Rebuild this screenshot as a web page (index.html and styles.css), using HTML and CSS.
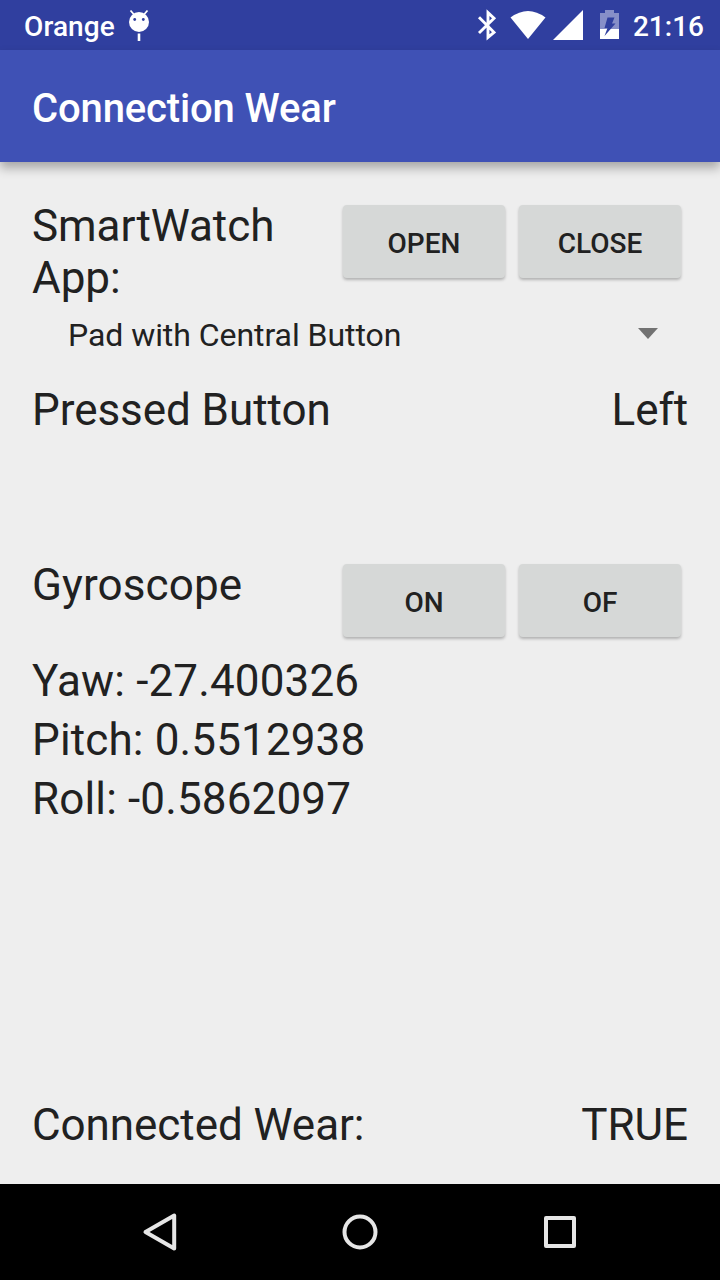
FILE: index.html
```html
<!DOCTYPE html>
<html lang="en">
<head>
<meta charset="utf-8">
<title>Connection Wear</title>
<link rel="stylesheet" href="styles.css">
</head>
<body>
<div class="screen">
  <header class="status-bar">
    <span class="carrier">Orange</span>
    <svg class="debug-icon" width="24" height="32" viewBox="0 0 24 32">
      <path d="M3.500 1.500 7 5.500M20.500 1.500 17 5.500" stroke="#fff" stroke-width="1.800"/>
      <circle cx="12" cy="13" r="10" fill="#fff"/>
      <circle cx="7.700" cy="10.500" r="1.400" fill="#303f9f"/>
      <circle cx="16.300" cy="10.500" r="1.400" fill="#303f9f"/>
      <path d="M10.700 24.500h2.600V32h-2.600z" fill="#fff"/>
    </svg>
    <svg class="system-icons" width="150" height="50" viewBox="470 0 150 50">
      <path d="M479 17.300 494 32.300 488 37.300V12.700L494 18.300 479 33" fill="none" stroke="#fff" stroke-width="2.900"/>
      <path d="M510.500 17.500Q528 4.500 545.500 17.500L528 39z" fill="#fff"/>
      <path d="M583 10v30h-30z" fill="#fff"/>
      <path d="M605 10h9v3h5v16h-19V13h5z" fill="#878fc8"/>
      <path d="M600 29h19v10h-19z" fill="#fff"/>
      <path d="M607.500 17.500h7L612 23.500h3.500L604.500 36l3-8H604.500z" fill="#303f9f"/>
    </svg>
    <span class="clock">21:16</span>
  </header>
  <div class="app-bar"><h1 class="title">Connection Wear</h1></div>
  <main class="content">
    <section class="row app-row">
      <div class="label">SmartWatch App:</div>
      <button class="button">OPEN</button>
      <button class="button">CLOSE</button>
    </section>
    <div class="spinner">
      <span>Pad with Central Button</span>
      <svg width="20" height="11" viewBox="0 0 20 11"><path d="M0 0h20L10 11z" fill="#727272"/></svg>
    </div>
    <section class="row pressed-row"><span>Pressed Button</span><span>Left</span></section>
    <section class="row gyro-row">
      <div class="label gyro-label">Gyroscope</div>
      <button class="button">ON</button>
      <button class="button">OF</button>
    </section>
    <section class="readings">
      <div>Yaw: -27.400326</div>
      <div>Pitch: 0.5512938</div>
      <div>Roll: -0.5862097</div>
    </section>
    <section class="row connected-row"><span>Connected Wear:</span><span>TRUE</span></section>
  </main>
  <nav class="nav-bar">
    <svg width="40" height="40" viewBox="0 0 40 40"><path d="M5.500 20 34.200 3.500V36.500z"/></svg>
    <svg width="40" height="40" viewBox="0 0 40 40"><circle cx="20" cy="20" r="15.500"/></svg>
    <svg width="40" height="40" viewBox="0 0 40 40"><path d="M6 6h28v28H6z"/></svg>
  </nav>
</div>
</body>
</html>
```
FILE: styles.css
```css
* {
  box-sizing: border-box;
}

body {
  margin: 0;
  font-family: Roboto, sans-serif;
  color: #212121;
}

.screen {
  display: flex;
  flex-direction: column;
  width: 720px;
  height: 1280px;
  background: #eee;
  overflow: hidden;
}

.status-bar {
  display: flex;
  height: 50px;
  padding: 0 16px 0 24px;
  background: #303f9f;
  color: #fff;
  font-size: 28px;
  font-weight: 500;
  line-height: 33px;
}

.carrier,
.clock {
  padding-top: 10px;
}

.carrier {
  letter-spacing: 0.1px;
}

.debug-icon {
  margin: 9px 0 0 12px;
}

.system-icons {
  margin-left: auto;
  margin-right: 13px;
}

.app-bar {
  height: 112px;
  flex: none;
  padding: 35px 32px 0;
  background: #3f51b5;
  color: #fff;
  box-shadow: 0 6px 10px rgba(0, 0, 0, 0.3);
}

.title {
  margin: 0;
  font-size: 40px;
  font-weight: 500;
  line-height: 47px;
  letter-spacing: -0.14px;
}

.content {
  display: flex;
  flex-direction: column;
  flex: 1;
  padding: 38px 32px 33px;
  font-size: 44px;
  line-height: 52px;
  letter-spacing: -0.06px;
}

.row {
  display: flex;
  justify-content: space-between;
}

.app-row,
.gyro-row {
  display: grid;
  grid-template-columns: 297px 162px 162px;
  justify-content: start;
  column-gap: 14px;
}

.gyro-label {
  letter-spacing: 0.1px;
}

.button {
  height: 73px;
  margin-top: 5px;
  padding: 3px 0 0;
  border: 0;
  border-radius: 4px;
  background: #d6d8d7;
  box-shadow: 0 2px 3px rgba(0, 0, 0, 0.25);
  color: #212121;
  font: 500 28px/33px Roboto, sans-serif;
}

.spinner {
  display: flex;
  align-items: center;
  justify-content: space-between;
  height: 38px;
  margin-top: 12px;
  padding: 0 30px 0 36px;
  font-size: 32px;
  line-height: 38px;
}

.spinner svg {
  margin-bottom: 3px;
}

.pressed-row {
  margin-top: 30px;
}

.gyro-row {
  margin-top: 123px;
}

.readings {
  display: grid;
  row-gap: 7px;
  margin-top: 18px;
  letter-spacing: 0.14px;
}

.connected-row {
  margin-top: auto;
}

.nav-bar {
  display: flex;
  align-items: center;
  justify-content: center;
  gap: 160px;
  height: 96px;
  background: #000;
}

.nav-bar svg {
  fill: none;
  stroke: #e6e6e6;
  stroke-width: 4;
  stroke-linejoin: round;
}
```
